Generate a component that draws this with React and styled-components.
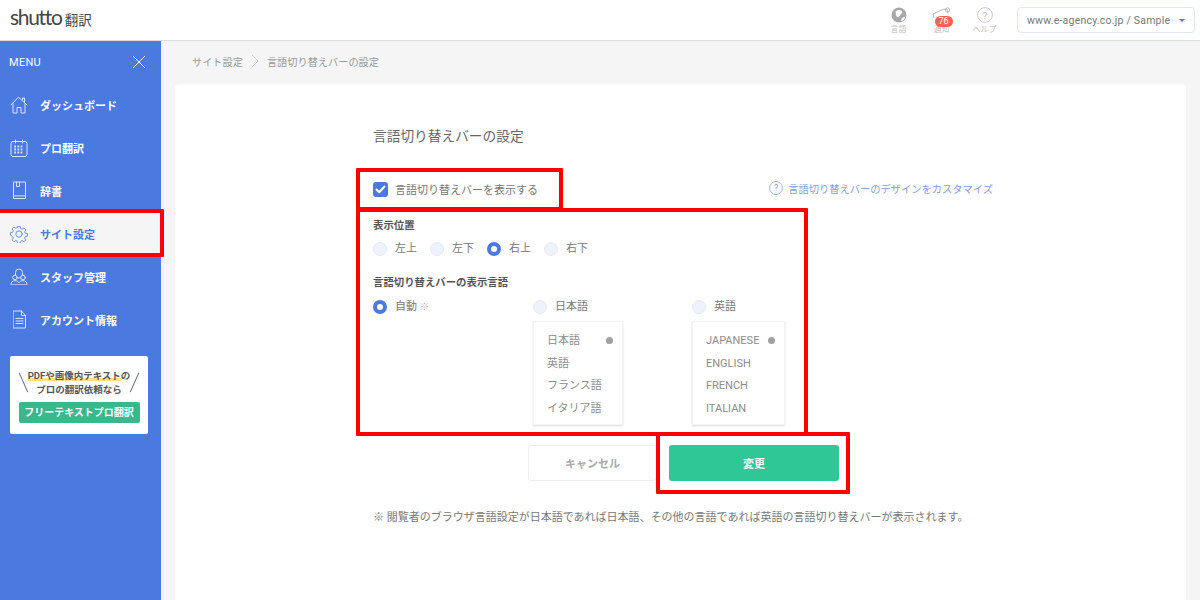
import React from "react";
import styled, { createGlobalStyle } from "styled-components";

const Global = createGlobalStyle`
  html, body { margin: 0; padding: 0; height: 100%; overflow: hidden; }
  body { font-family: Roboto, "Noto Sans CJK JP", sans-serif; color: #666; background: #f5f5f5; }
  * { box-sizing: border-box; }
`;

const Page = styled.div`
  position: relative;
  width: 1200px;
  height: 600px;
  display: flex;
  flex-direction: column;
  overflow: hidden;
`;
const Header = styled.header`
  height: 41px;
  flex: none;
  background: #fff;
  border-bottom: 1px solid #dcdcdc;
  display: flex;
  align-items: center;
  padding: 0 5px 0 10px;
`;
const Logo = styled.div`
  display: flex;
  align-items: baseline;
  color: #444;
  flex: 1;
  padding-bottom: 7px;
`;
const LogoWord = styled.span`
  font-family: Lato, sans-serif;
  font-size: 21px;
  font-weight: 400;
  letter-spacing: -1.3px;
`;
const LogoJa = styled.span`
  font-size: 13.5px;
  margin-left: 3px;
  font-weight: 400;
`;
const HeaderTool = styled.div`
  position: relative;
  width: 43px;
  height: 36px;
  padding-top: 5px;
  margin-top: -1px;
  display: flex;
  flex-direction: column;
  align-items: center;
  color: #c0c0c0;
  font-size: 8px;
  line-height: 10px;
`;
const ToolIcon = styled.span`
  height: 18px;
  display: flex;
  align-items: flex-start;
  justify-content: center;
`;
const Badge = styled.span`
  position: absolute;
  top: 14px;
  left: 50%;
  margin-left: -7px;
  width: 18px;
  height: 11px;
  border-radius: 6px;
  background: #f8654f;
  color: #fff;
  font-size: 9px;
  line-height: 11px;
  text-align: center;
`;
const SiteSelect = styled.div`
  width: 178px;
  height: 26px;
  margin-left: 11px;
  border: 1px solid #dfe7f6;
  border-radius: 4px;
  background: #fff;
  display: flex;
  align-items: center;
  justify-content: space-between;
  padding: 0 9px 0 9px;
  font-size: 10.5px;
  letter-spacing: 0.22px;
  color: #777;
`;
const Caret = styled.span`
  width: 0;
  height: 0;
  border-left: 3px solid transparent;
  border-right: 3px solid transparent;
  border-top: 3px solid #4a79e0;
`;
const Body = styled.div`
  flex: 1;
  display: flex;
  min-height: 0;
`;
const Sidebar = styled.aside`
  width: 161px;
  flex: none;
  background: #4a79df;
  color: #fff;
`;
const MenuHead = styled.div`
  height: 42px;
  display: flex;
  align-items: center;
  justify-content: space-between;
  padding: 0 15px 0 9px;
  font-size: 11px;
  letter-spacing: 0.3px;
`;
const NavItem = styled.div`
  height: 43px;
  display: flex;
  align-items: center;
  gap: 12px;
  padding-left: 10px;
  font-size: 11px;
  font-weight: 700;
  background: ${(p) => (p.$active ? "#f5f5f5" : "transparent")};
  color: ${(p) => (p.$active ? "#4a79df" : "#fff")};
`;
const NavList = styled.nav`
  display: flex;
  flex-direction: column;
`;
const IconSlot = styled.span`
  width: 18px;
  height: 20px;
  display: flex;
  align-items: center;
  justify-content: center;
  opacity: 0.8;
`;
const Promo = styled.div`
  margin: 15px 13px 0 10px;
  height: 78px;
  background: #fff;
  border-radius: 2px;
  padding: 13px 0 0;
  display: flex;
  flex-direction: column;
  align-items: center;
  position: relative;
`;
const PromoLine = styled.div`
  font-size: 9.5px;
  font-weight: 700;
  line-height: 13.5px;
  color: #555;
  white-space: nowrap;
`;
const Marked = styled.span`
  background: linear-gradient(transparent 72%, #fbe27a 72%);
`;
const Slash = styled.span`
  position: absolute;
  top: 16px;
  ${(p) => (p.$right ? "right: 13px" : "left: 13px")};
  width: 1px;
  height: 21px;
  background: #666;
  transform: rotate(${(p) => (p.$right ? 24 : -24)}deg);
`;
const PromoButton = styled.div`
  margin-top: 6px;
  width: 121px;
  height: 21px;
  border-radius: 2px;
  background: #3bb78c;
  color: #fff;
  font-size: 10px;
  font-weight: 700;
  line-height: 21px;
  text-align: center;
  white-space: nowrap;
`;
const Main = styled.main`
  flex: 1;
  padding: 0 14px;
  min-width: 0;
`;
const Crumbs = styled.div`
  height: 43px;
  padding: 0 0 3px 17px;
  display: flex;
  align-items: center;
  gap: 8px;
  font-size: 10.2px;
  color: #999;
`;
const Card = styled.section`
  background: #fff;
  border-radius: 4px 4px 0 0;
  height: 560px;
  padding: 43px 0 0 198px;
`;
const Title = styled.h1`
  margin: 0;
  font-size: 13.7px;
  line-height: 18px;
  font-weight: 400;
  color: #666;
`;
const TopRow = styled.div`
  margin-top: 31px;
  width: 620px;
  display: flex;
  align-items: center;
  justify-content: space-between;
  height: 26px;
`;
const Check = styled.label`
  display: flex;
  align-items: center;
  gap: 7px;
  font-size: 11px;
  color: #777;
`;
const CheckBox = styled.span`
  width: 15px;
  height: 15px;
  border-radius: 3px;
  background: #4a79df;
  display: flex;
  align-items: center;
  justify-content: center;
`;
const Customize = styled.a`
  display: flex;
  align-items: center;
  gap: 5px;
  font-size: 10.25px;
  color: #7fa0df;
  margin-top: -2px;
`;
const Section = styled.div`
  margin-top: ${(p) => p.$mt}px;
  font-size: 10.4px;
  font-weight: 700;
  line-height: 14px;
  color: #555;
`;
const PosRow = styled.div`
  margin-top: 9px;
  display: flex;
  gap: 13px;
`;
const RadioLabel = styled.div`
  display: flex;
  align-items: center;
  gap: 8px;
  font-size: 11px;
  line-height: 14px;
  color: #777;
  white-space: nowrap;
`;
const Dot = styled.span`
  width: 14px;
  height: 14px;
  border-radius: 50%;
  flex: none;
  background: ${(p) => (p.$on ? "#fff" : "#eef2fa")};
  border: ${(p) => (p.$on ? "4px solid #4a79df" : "1px solid #e4eaf5")};
`;
const Note = styled.small`
  font-size: 9px;
  color: #aaa;
  margin-left: -5px;
`;
const LangGrid = styled.div`
  margin-top: 10px;
  display: grid;
  grid-template-columns: 160px 159px 100px;
`;
const LangCol = styled.div`
  display: flex;
  flex-direction: column;
  align-items: flex-start;
`;
const Preview = styled.div`
  margin-top: 7px;
  width: ${(p) => p.$w}px;
  height: 104px;
  padding: 8px 0 0 13px;
  background: #fff;
  border: 1px solid #f3f3f3;
  box-shadow: 0 1px 2px rgba(0, 0, 0, 0.14);
`;
const PreviewItem = styled.div`
  position: relative;
  height: 22.5px;
  line-height: 22px;
  font-size: 11px;
  color: #8c8c8c;
  white-space: nowrap;
`;
const Active = styled.span`
  position: absolute;
  top: 7px;
  right: 9px;
  width: 7px;
  height: 7px;
  border-radius: 50%;
  background: #a0a0a0;
`;
const Actions = styled.div`
  margin-top: 20px;
  margin-left: 155px;
  display: flex;
  gap: 12px;
`;
const Cancel = styled.button`
  width: 129px;
  height: 36px;
  padding: 0;
  font: 700 11px Roboto, "Noto Sans CJK JP", sans-serif;
  color: #aaa;
  background: #fff;
  border: 1px solid #eee;
  border-radius: 3px;
`;
const Submit = styled.button`
  width: 170px;
  height: 36px;
  padding: 0;
  font: 700 11px Roboto, "Noto Sans CJK JP", sans-serif;
  color: #fff;
  background: #2fc796;
  border: 0;
  border-radius: 3px;
`;
const Footnote = styled.p`
  margin: 29px 0 0;
  font-size: 11px;
  line-height: 16px;
  color: #777;
  white-space: nowrap;
`;
const Highlight = styled.div`
  position: absolute;
  left: ${(p) => p.$x}px;
  top: ${(p) => p.$y}px;
  width: ${(p) => p.$w}px;
  height: ${(p) => p.$h}px;
  border: 4px solid #fe0000;
  border-radius: 1px;
  pointer-events: none;
`;

const stroke = { fill: "none", stroke: "currentColor", strokeWidth: 1, strokeLinecap: "round", strokeLinejoin: "round" };
const HomeIcon = () => (
  <svg width="18" height="18" viewBox="0 0 18 18" {...stroke}>
    <path d="M.8 9 8.500 1.200 17 9M3 7.500V17h4v-5.500h4V17h4V7.500M12.500 4V2h2v4" />
  </svg>
);
const CalIcon = () => (
  <svg width="18" height="18" viewBox="0 0 18 18" {...stroke}>
    <rect x="1" y="2.500" width="16" height="15" rx="2" />
    <path d="M5.500 1v3M12.500 1v3" />
    <path strokeDasharray="1.800 1.400" strokeWidth="1.800" strokeLinecap="butt" d="M4.200 7.500h9.600M4.200 10.500h9.600M4.200 13.500h9.600" />
  </svg>
);
const BookIcon = () => (
  <svg width="15" height="19" viewBox="0 0 15 19" {...stroke}>
    <path d="M1.500 14.500V1h12v13.500zM1.500 14.500v3h12v-3M4.500 1v4.500h3V1" />
  </svg>
);
const GearIcon = () => (
  <svg width="18" height="18" viewBox="0 0 18 18" {...stroke}>
    <circle cx="9" cy="9" r="3.200" />
    <path d="M7.600 1h2.800l.4 2.300 1.500.7 2-1.300 2 2-1.300 2 .7 1.500 2.300.4v2.800l-2.300.4-.7 1.500 1.300 2-2 2-2-1.300-1.500.7-.4 2.300H7.600l-.4-2.300-1.500-.7-2 1.300-2-2 1.300-2-.7-1.500L0 10.400V7.600l2.300-.4.7-1.500-1.300-2 2-2 2 1.300 1.500-.7z" transform="translate(.5 .5) scale(.94)" />
  </svg>
);
const StaffIcon = () => (
  <svg width="18" height="18" viewBox="0 0 18 18" {...stroke}>
    <path d="M5.500 7V4.500a3.500 3.500 0 0 1 7 0V7M7 9.500c.8.800 3.200.800 4 0" />
    <circle cx="5" cy="9.500" r="2.300" />
    <circle cx="13" cy="9.500" r="2.300" />
    <path d="M1 16.500c0-2.500 1.500-3.800 4-3.800 1.800 0 3.200.700 4 2 .8-1.300 2.200-2 4-2 2.500 0 4 1.300 4 3.800z" />
  </svg>
);
const DocIcon = () => (
  <svg width="15" height="19" viewBox="0 0 15 19" {...stroke}>
    <path d="M1.500 1h8l4 4.500V18h-12zM9.500 1v4.500h4M4 8.500h7M4 11h7M4 13.500h7" />
  </svg>
);
const CloseIcon = () => (
  <svg width="14" height="14" viewBox="0 0 14 14" fill="none" stroke="#fff" strokeWidth="1">
    <path d="M1 1l12 12M13 1 1 13" />
  </svg>
);
const ChevronIcon = () => (
  <svg width="8" height="14" viewBox="0 0 8 14" fill="none" stroke="#ccc" strokeWidth="1">
    <path d="M1 1l6 6-6 6" />
  </svg>
);
const GlobeIcon = () => (
  <svg width="16" height="16" viewBox="0 0 16 16">
    <circle cx="8" cy="8" r="7.500" fill="#a8a8a8" />
    <path d="M5 4c2-1.500 5-1 6 0s0 2-1 3-2 3-3 3-2-1-2-2-1-3 0-4z" fill="#fff" />
    <path d="M10 14c0-2 1-3 3-4l1.500-.5c-.5 2.500-2.500 4.500-4.500 4.500z" fill="#fff" />
  </svg>
);
const BellIcon = () => (
  <svg width="20" height="12" viewBox="0 0 20 12" fill="none" stroke="#b8b8b8" strokeWidth="1">
    <path d="M1 7 11 2.500l4-.5 1 4M1 7l1 4" />
    <circle cx="15.500" cy="3" r="2.200" />
  </svg>
);
const HelpIcon = ({ size = 16, color = "#c4c4c4" }) => (
  <svg width={size} height={size} viewBox="0 0 18 18">
    <circle cx="9" cy="9" r="8.300" fill="none" stroke={color} strokeWidth="1" />
    <text x="9" y="13" textAnchor="middle" fontSize="11" fill={color} fontFamily="Roboto, sans-serif">?</text>
  </svg>
);
const TickIcon = () => (
  <svg width="11" height="9" viewBox="0 0 11 9" fill="none" stroke="#fff" strokeWidth="2" strokeLinecap="round" strokeLinejoin="round">
    <path d="M1.500 4.500 4.200 7.200 9.500 1.500" />
  </svg>
);

const nav = [
  ["ダッシュボード", HomeIcon],
  ["プロ翻訳", CalIcon],
  ["辞書", BookIcon],
  ["サイト設定", GearIcon, true],
  ["スタッフ管理", StaffIcon],
  ["アカウント情報", DocIcon],
];

export default function App() {
  return (
    <Page>
      <Global />
      <Header>
        <Logo>
          <LogoWord>shutto</LogoWord>
          <LogoJa>翻訳</LogoJa>
        </Logo>
        <HeaderTool><ToolIcon><GlobeIcon /></ToolIcon>言語</HeaderTool>
        <HeaderTool><ToolIcon><BellIcon /></ToolIcon><Badge>76</Badge>通知</HeaderTool>
        <HeaderTool><ToolIcon><HelpIcon /></ToolIcon>ヘルプ</HeaderTool>
        <SiteSelect>www.e-agency.co.jp / Sample<Caret /></SiteSelect>
      </Header>
      <Body>
        <Sidebar>
          <MenuHead>MENU<CloseIcon /></MenuHead>
          <NavList>
            {nav.map(([label, Icon, active]) => (
              <NavItem key={label} $active={active}>
                <IconSlot><Icon /></IconSlot>
                {label}
              </NavItem>
            ))}
          </NavList>
          <Promo>
            <Slash />
            <Slash $right />
            <PromoLine><Marked>PDFや画像内テキスト</Marked>の</PromoLine>
            <PromoLine>プロの翻訳依頼なら</PromoLine>
            <PromoButton>フリーテキストプロ翻訳</PromoButton>
          </Promo>
        </Sidebar>
        <Main>
          <Crumbs>サイト設定<ChevronIcon />言語切り替えバーの設定</Crumbs>
          <Card>
            <Title>言語切り替えバーの設定</Title>
            <TopRow>
              <Check><CheckBox><TickIcon /></CheckBox>言語切り替えバーを表示する</Check>
              <Customize><HelpIcon size={14} color="#7fa0df" />言語切り替えバーのデザインをカスタマイズ</Customize>
            </TopRow>
            <Section $mt={17}>表示位置</Section>
            <PosRow>
              <RadioLabel><Dot />左上</RadioLabel>
              <RadioLabel><Dot />左下</RadioLabel>
              <RadioLabel><Dot $on />右上</RadioLabel>
              <RadioLabel><Dot />右下</RadioLabel>
            </PosRow>
            <Section $mt={20}>言語切り替えバーの表示言語</Section>
            <LangGrid>
              <LangCol>
                <RadioLabel><Dot $on />自動 <Note>※</Note></RadioLabel>
              </LangCol>
              <LangCol>
                <RadioLabel><Dot />日本語</RadioLabel>
                <Preview $w={90}>
                  <PreviewItem>日本語<Active /></PreviewItem>
                  <PreviewItem>英語</PreviewItem>
                  <PreviewItem>フランス語</PreviewItem>
                  <PreviewItem>イタリア語</PreviewItem>
                </Preview>
              </LangCol>
              <LangCol>
                <RadioLabel><Dot />英語</RadioLabel>
                <Preview $w={93}>
                  <PreviewItem>JAPANESE<Active /></PreviewItem>
                  <PreviewItem>ENGLISH</PreviewItem>
                  <PreviewItem>FRENCH</PreviewItem>
                  <PreviewItem>ITALIAN</PreviewItem>
                </Preview>
              </LangCol>
            </LangGrid>
            <Actions>
              <Cancel>キャンセル</Cancel>
              <Submit>変更</Submit>
            </Actions>
            <Footnote>※ 閲覧者のブラウザ言語設定が日本語であれば日本語、その他の言語であれば英語の言語切り替えバーが表示されます。</Footnote>
          </Card>
        </Main>
      </Body>
      <Highlight $x={-4} $y={209} $w={168} $h={48} />
      <Highlight $x={356} $y={168} $w={207} $h={43} />
      <Highlight $x={356} $y={208} $w={452} $h={228} />
      <Highlight $x={656} $y={432} $w={194} $h={62} />
    </Page>
  );
}
